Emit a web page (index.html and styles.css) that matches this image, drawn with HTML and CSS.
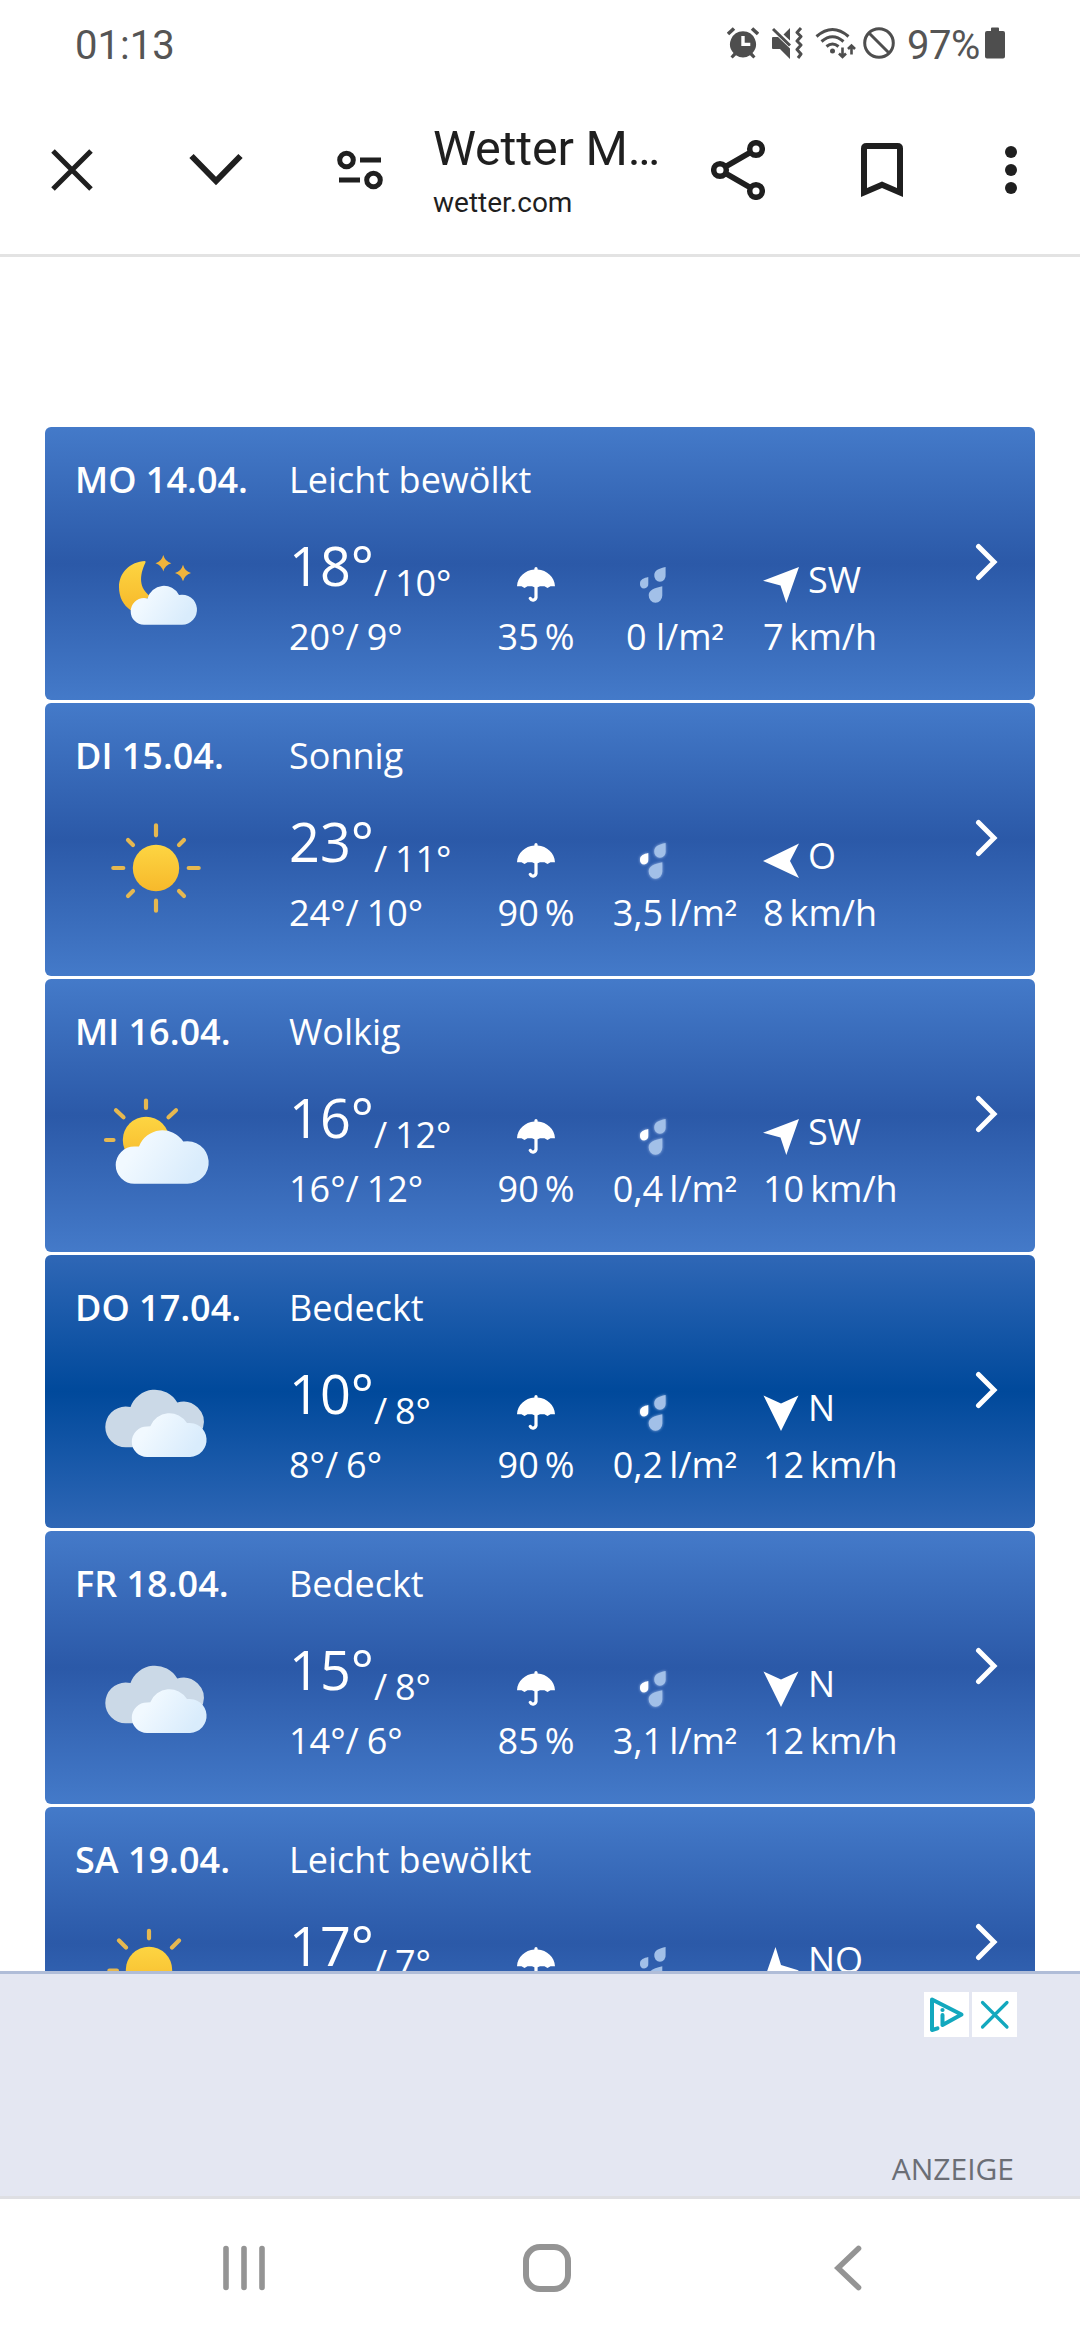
FILE: index.html
```html
<!DOCTYPE html>
<html lang="de">
<head>
<meta charset="utf-8">
<title>Wetter</title>
<link rel="stylesheet" href="styles.css">
</head>
<body>
<svg class="defs" width="0" height="0">
  <defs>
    <linearGradient id="gold" x1="0" y1="0" x2="0" y2="1"><stop offset="0" stop-color="#fdd542"/><stop offset="1" stop-color="#f7b92b"/></linearGradient>
    <linearGradient id="white" x1="0" y1="0" x2="1" y2="0.4"><stop offset="0.3" stop-color="#f1f9ff"/><stop offset="1" stop-color="#d9ecfc"/></linearGradient>
    <symbol id="umbrella" viewBox="0 0 38 36">
      <path fill="#fff" d="M19 0a1.6 1.6 0 0 1 1.6 1.6v1C30 3.300 37.500 10 38 19.300H33.500L30.500 21 27.500 19.300H23L20.600 20.300H17.400L15 19.300H10.500L7.500 21 4.500 19.300H0C.5 10 8 3.300 17.400 2.600v-1A1.600 1.600 0 0 1 19 0z"/>
      <path fill="none" stroke="#fff" stroke-width="3.200" stroke-linecap="round" d="M19 18v12.500a3.200 3.700 0 0 1-5.800.8"/>
    </symbol>
    <symbol id="rain" viewBox="-4 -4 34 44">
      <path class="d1" d="M8.300 10V16.500A4.200 4.500 0 1 1 0 16.300C0 12.500 4 11 8.300 10z"/>
      <path class="d2" d="M25.600 0V8A5.700 5.900 0 1 1 14.300 8C14.300 3.500 19 1.300 25.600 0z"/>
      <path class="d2" d="M22.300 19.300V28.500A6.800 7.300 0 1 1 8.700 28.300C8.700 23.500 14 21 22.300 19.300z"/>
    </symbol>
    <symbol id="sw" viewBox="0 0 36 36"><path fill="#fff" d="M36 0 0 13.700 17.500 18.500 23.300 36z"/></symbol>
    <symbol id="east" viewBox="0 0 36 36"><path fill="#fff" d="M36 .5 27 18 36 35 0 18z"/></symbol>
    <symbol id="north" viewBox="0 0 36 36"><path fill="#fff" d="M.5 .5 18 8.500 35.500 .5 18 36z"/></symbol>
    <symbol id="no" viewBox="0 0 36 36"><path fill="#fff" d="M12.500 0 18 18 36 23.500 0 36z"/></symbol>
    <symbol id="chev" viewBox="0 0 24 38"><path fill="none" stroke="#fff" stroke-width="5" stroke-linecap="round" stroke-linejoin="miter" d="M3.500 3.500 19 19 3.500 34.500"/></symbol>
    <symbol id="overcast" viewBox="0 0 120 120">
      <path fill="#cbd9e7" d="M29.600 87.200A20.300 20.300 0 0 1 29.600 46.600L34.500 46.900A25.900 25.900 0 0 1 81.300 42.600 20.500 20.500 0 0 1 107 68L90 87.200z"/>
      <path fill="url(#white)" d="M51 96.900A15.200 15.200 0 0 1 51 66.500L54.300 66.300A20.600 20.600 0 0 1 91 63.100 17 17 0 1 1 94 96.900z"/>
    </symbol>
  </defs>
</svg>

<div class="screen">
  <div class="status">
    <span class="clock">01:13</span>
    <svg class="i-alarm" width="32" height="32" viewBox="0 0 32 32"><path fill="#4e4e4e" fill-rule="evenodd" d="M16 4.200a13 13 0 0 1 9.500 21.800l3 3.500-2.200 2-3.300-3.200a13 13 0 0 1-14 0l-3.300 3.200-2.200-2 3-3.500A13 13 0 0 1 16 4.200zM14.300 9v10h9v-3.200h-5.600V9z"/><path stroke="#4e4e4e" stroke-width="3.600" d="m1 7 6-5.500M31 7l-6-5.500"/></svg>
    <svg class="i-mute" width="32" height="32" viewBox="0 0 32 32"><path fill="#4e4e4e" d="M1 11q0-1 1-1h5L19 21.500V32L9 22H2q-1 0-1-1zM19 1v12.500L12.500 7.500z"/><path stroke="#4e4e4e" stroke-width="3" d="m2 2 17 16.500"/><path fill="none" stroke="#4e4e4e" stroke-width="3" stroke-linejoin="round" d="m30 1-4 4.500 4 4-4 4.500 4 4-4 4.500 4 4.500-3 4"/></svg>
    <svg class="i-wifi" width="42" height="32" viewBox="0 0 42 32"><g fill="none" stroke="#4e4e4e" stroke-width="3"><path d="M1.500 9.500q16-14 32 0M6.500 14.500q11-9.500 22 0M11.500 19.500q6-5 12 0"/><path stroke-width="2.600" d="M27.500 20.500v9M24 26.500l3.500 3.500 3.500-3.500M36.500 27.500v-9M33 22l3.500-3.500L40 22"/></g><circle cx="17.500" cy="24" r="2.500" fill="#4e4e4e"/></svg>
    <svg class="i-no" width="32" height="32" viewBox="0 0 32 32"><g fill="none" stroke="#4e4e4e" stroke-width="3"><circle cx="16" cy="16" r="14.300"/><path d="m6 6 20 20"/></g></svg>
    <span class="pct">97%</span>
    <svg class="i-bat" width="20" height="32" viewBox="0 0 20 32"><path fill="#4e4e4e" d="M6 1.500Q6 .5 7 .5h6q1 0 1 1V4h4q2 0 2 2v23.500q0 2-2 2H2q-2 0-2-2V6q0-2 2-2h4z"/></svg>
  </div>

  <header class="bar">
    <svg class="b-x" width="42" height="42" viewBox="0 0 42 42"><path stroke="#1f1f1f" stroke-width="5" d="m2 2 38 38M40 2 2 40"/></svg>
    <svg class="b-down" width="54" height="34" viewBox="0 0 54 34"><path fill="none" stroke="#1f1f1f" stroke-width="6" d="m2.500 3 24.500 25L51.500 3"/></svg>
    <svg class="b-tune" width="46" height="40" viewBox="0 0 46 40"><g fill="none" stroke="#1f1f1f" stroke-width="5"><circle cx="9.500" cy="10" r="6.800"/><circle cx="36.500" cy="30" r="6.800"/><path d="M23 10h21M2 30h21"/></g></svg>
    <div class="heading">
      <div class="title">Wetter M…</div>
      <div class="domain">wetter.com</div>
    </div>
    <svg class="b-share" width="54" height="60" viewBox="0 0 54 60"><g fill="none" stroke="#1f1f1f" stroke-width="5.500"><circle cx="9" cy="30" r="6.300"/><circle cx="45" cy="9" r="6.300"/><circle cx="45" cy="51" r="6.300"/><path d="M14 27 40 12M14 33l26 15"/></g></svg>
    <svg class="b-mark" width="42" height="54" viewBox="0 0 42 54"><path fill="#1f1f1f" fill-rule="evenodd" d="M5.500 0h31Q42 0 42 5.500V54L21 45 0 54V5.500Q0 0 5.500 0zM6 6v39l15-6.500L36 45V6z"/></svg>
    <svg class="b-more" width="12" height="48" viewBox="0 0 12 48"><g fill="#1f1f1f"><circle cx="6" cy="6" r="6"/><circle cx="6" cy="24" r="6"/><circle cx="6" cy="42" r="6"/></g></svg>
  </header>

  <main class="list">
    <section class="card">
      <div class="day">MO 14.04.</div><div class="desc">Leicht bewölkt</div>
      <svg class="sky" viewBox="0 0 120 120"><path fill="url(#gold)" d="M49.300 29C34 29.500 23 41 23 55 23 65 27 73 35 78.500L54 64C43 56 43 44 49.500 30.500z"/><path fill="#f0b43c" d="M67.300 23Q69 29.500 75.300 31.300 69 33 67.300 39.500 65.500 33 59.500 31.300 65.500 29.500 67.300 23zM87 32.800Q88.700 39.300 95 41 88.700 42.800 87 49.300 85.300 42.800 79 41 85.300 39.300 87 32.800z"/><path fill="url(#white)" d="M48 92.700A13.300 13.300 0 0 1 48 66.100L51.500 66.400A17 17 0 0 1 83 63 15 15 0 1 1 86 92.700z"/></svg>
      <div class="temp"><span class="max">18°</span><span class="min">/ 10°</span></div>
      <svg class="umb"><use href="#umbrella"/></svg><svg class="drops"><use href="#rain"/></svg>
      <div class="dir"><svg><use href="#sw"/></svg><span>SW</span></div>
      <div class="sub">20°/ 9°</div><div class="prob">35&#8201;%</div><div class="amount">0 l/m<span class="sq">²</span></div><div class="speed">7&#8201;km/h</div>
      <svg class="go"><use href="#chev"/></svg>
    </section>
    <section class="card">
      <div class="day">DI 15.04.</div><div class="desc">Sonnig</div>
      <svg class="sky" viewBox="0 0 120 120"><circle cx="60" cy="60" r="23.200" fill="url(#gold)"/><path stroke="#e6b850" stroke-width="4.200" stroke-linecap="round" d="M60 17.300v10M60 92.700v10M17.300 60h10M92.700 60h10M32 32l5 5M83 83l5 5M88 32l-5 5M37 83l-5 5"/></svg>
      <div class="temp"><span class="max">23°</span><span class="min">/ 11°</span></div>
      <svg class="umb"><use href="#umbrella"/></svg><svg class="drops wet"><use href="#rain"/></svg>
      <div class="dir"><svg><use href="#east"/></svg><span>O</span></div>
      <div class="sub">24°/ 10°</div><div class="prob">90&#8201;%</div><div class="amount">3,5&#8201;l/m<span class="sq">²</span></div><div class="speed">8&#8201;km/h</div>
      <svg class="go"><use href="#chev"/></svg>
    </section>
    <section class="card">
      <div class="day">MI 16.04.</div><div class="desc">Wolkig</div>
      <svg class="sky" viewBox="0 0 120 120"><circle cx="50" cy="56" r="23.200" fill="url(#gold)"/><path stroke="#e6b850" stroke-width="4.200" stroke-linecap="round" d="M50 16.500v7.500M10 56h7.500M20 26.300l7.500 7M80 26.300l-7.500 7"/><path fill="url(#white)" d="M38.400 99.800A18.700 18.700 0 0 1 38.400 62.400H43A25 25 0 0 1 87.300 57.600 21.300 21.300 0 1 1 91 99.800z"/></svg>
      <div class="temp"><span class="max">16°</span><span class="min">/ 12°</span></div>
      <svg class="umb"><use href="#umbrella"/></svg><svg class="drops wet"><use href="#rain"/></svg>
      <div class="dir"><svg><use href="#sw"/></svg><span>SW</span></div>
      <div class="sub">16°/ 12°</div><div class="prob">90&#8201;%</div><div class="amount">0,4&#8201;l/m<span class="sq">²</span></div><div class="speed">10&#8201;km/h</div>
      <svg class="go"><use href="#chev"/></svg>
    </section>
    <section class="card dark">
      <div class="day">DO 17.04.</div><div class="desc">Bedeckt</div>
      <svg class="sky"><use href="#overcast"/></svg>
      <div class="temp"><span class="max">10°</span><span class="min">/ 8°</span></div>
      <svg class="umb"><use href="#umbrella"/></svg><svg class="drops wet"><use href="#rain"/></svg>
      <div class="dir"><svg><use href="#north"/></svg><span>N</span></div>
      <div class="sub">8°/ 6°</div><div class="prob">90&#8201;%</div><div class="amount">0,2&#8201;l/m<span class="sq">²</span></div><div class="speed">12&#8201;km/h</div>
      <svg class="go"><use href="#chev"/></svg>
    </section>
    <section class="card">
      <div class="day">FR 18.04.</div><div class="desc">Bedeckt</div>
      <svg class="sky"><use href="#overcast"/></svg>
      <div class="temp"><span class="max">15°</span><span class="min">/ 8°</span></div>
      <svg class="umb"><use href="#umbrella"/></svg><svg class="drops wet"><use href="#rain"/></svg>
      <div class="dir"><svg><use href="#north"/></svg><span>N</span></div>
      <div class="sub">14°/ 6°</div><div class="prob">85&#8201;%</div><div class="amount">3,1&#8201;l/m<span class="sq">²</span></div><div class="speed">12&#8201;km/h</div>
      <svg class="go"><use href="#chev"/></svg>
    </section>
    <section class="card">
      <div class="day">SA 19.04.</div><div class="desc">Leicht bewölkt</div>
      <svg class="sky" viewBox="0 0 120 120"><circle cx="53" cy="58" r="23.200" fill="url(#gold)"/><path stroke="#e6b850" stroke-width="4.200" stroke-linecap="round" d="M53 18.800v7.500M13.400 58.500h7.500M23 28.500l7 7M83 28.500l-7 7"/></svg>
      <div class="temp"><span class="max">17°</span><span class="min">/ 7°</span></div>
      <svg class="umb"><use href="#umbrella"/></svg><svg class="drops"><use href="#rain"/></svg>
      <div class="dir"><svg><use href="#no"/></svg><span>NO</span></div>
      <svg class="go"><use href="#chev"/></svg>
    </section>
  </main>

  <aside class="ad">
    <div class="choices">
      <svg viewBox="0 0 45 45"><g fill="none" stroke="#12a8be" stroke-width="4" stroke-linecap="round" stroke-linejoin="round"><path d="M13.500 36.300 8 38V7.500L37.500 22.500 18.500 33V23"/></g><circle cx="18.500" cy="18" r="2.100" fill="#12a8be"/></svg>
      <svg viewBox="0 0 45 45"><path stroke="#12a8be" stroke-width="3.200" stroke-linecap="round" d="m10.500 10.500 24.500 24.500M35 10.500 10.500 35"/></svg>
    </div>
    <div class="label">ANZEIGE</div>
  </aside>

  <nav class="nav">
    <svg width="42" height="46" viewBox="0 0 42 46"><path stroke="#949494" stroke-width="5.600" stroke-linecap="round" d="M3 3.500v39M21 3.500v39M39 3.500v39"/></svg>
    <svg class="home" width="48" height="48" viewBox="0 0 48 48"><rect x="3" y="3" width="42" height="42" rx="14" fill="none" stroke="#949494" stroke-width="6"/></svg>
    <svg width="28" height="46" viewBox="0 0 28 46"><path fill="none" stroke="#949494" stroke-width="5.600" stroke-linecap="round" d="M24.500 3.500 4 23l20.500 19.500"/></svg>
  </nav>
</div>
</body>
</html>
```

FILE: styles.css
```css
* { box-sizing: border-box; }
body { margin: 0; background: #fff; font-family: "Open Sans", sans-serif; }
svg { display: block; flex: none; }
.defs { height: 0; overflow: hidden; }
.screen { width: 1080px; height: 2340px; display: flex; flex-direction: column; overflow: hidden; }

.status { height: 86px; display: flex; align-items: center; padding-left: 75px; font: 40px/48px Roboto, sans-serif; color: #555; }
.status .clock { width: 652px; padding-top: 5px; }
.i-mute { margin-left: 12px; }
.i-wifi { margin-left: 12px; }
.i-no { margin-left: 6px; }
.status .pct { width: 78px; margin-left: 12px; padding-top: 5px; letter-spacing: -0.5px; white-space: nowrap; }

.bar { height: 171px; display: flex; align-items: center; padding: 0 0 0 51px; border-bottom: 3px solid #e3e3e3; font-family: Roboto, sans-serif; color: #1f1f1f; }
.b-down { margin-left: 96px; }
.b-tune { margin-left: 94px; }
.heading { width: 228px; margin-left: 50px; padding-top: 2px; white-space: nowrap; }
.title { font-size: 48.5px; letter-spacing: -0.2px; line-height: 60px; }
.domain { font-size: 28px; line-height: 40px; margin-top: 4px; }
.b-share { margin-left: 50px; }
.b-mark { margin-left: 96px; }
.b-more { margin-left: 102px; }

.list { height: 1714px; padding: 170px 45px 0; overflow: hidden; display: flex; flex-direction: column; gap: 3px; }
.card {
  flex: none;
  height: 273px;
  padding: 29px 0 0 30px;
  display: grid;
  grid-template-columns: 214px 192px 110px 168px 213px 30px;
  grid-template-rows: 48px 109px 48px;
  border-radius: 6px;
  background: linear-gradient(#447ac9, #2b59a8 50%, #447ac9);
  color: #fff;
  font-size: 36px;
  line-height: 48px;
  white-space: nowrap;
}
.card.dark { background: linear-gradient(#2f67b6, #00499b 50%, #2f67b6); }
.day { font-weight: 600; }
.desc { grid-column: 2 / 6; }
.sky { grid-column: 1; grid-row: 2 / 4; width: 120px; height: 120px; margin: 28px 0 0 21px; }
.temp, .umb, .drops, .dir { grid-row: 2; align-self: end; }
.temp { grid-column: 2; display: flex; align-items: flex-end; margin-bottom: 6px; }
.max { font-size: 54px; line-height: 60px; margin-bottom: 12px; }
.min, .sub { word-spacing: -1.5px; }
.umb { grid-column: 3; width: 38px; height: 36px; justify-self: center; margin-bottom: 10px; }
.drops { grid-column: 4; width: 34px; height: 44px; margin: 0 0 6px 45px; fill: #a2c0e8; --first: #a2c0e8; overflow: visible; }
.drops.wet { --first: #fff; filter: drop-shadow(0 0 1.5px rgba(200, 220, 255, 0.7)); }
.d1 { fill: var(--first); }
.dir { grid-column: 5; display: flex; align-items: flex-end; gap: 9px; margin-bottom: 9px; padding-left: 4px; }
.dir svg { width: 36px; height: 36px; margin-bottom: 1px; }
.sub, .prob, .amount, .speed { grid-row: 3; }
.sub { grid-column: 2; }
.prob { grid-column: 3; text-align: center; }
.amount { grid-column: 4; width: 168px; text-align: center; }
.sq { display: inline-block; line-height: 1; transform: translateY(5px); }
.speed { grid-column: 5; padding-left: 4px; }
.go { grid-column: 6; grid-row: 2; width: 24px; height: 38px; margin: 39px 0 0 3px; }

.ad { height: 228px; background: #e4e7f2; border-top: 3px solid #b0bdd8; border-bottom: 3px solid #dedfe3; padding: 18px 63px 0 0; display: flex; flex-direction: column; align-items: flex-end; justify-content: space-between; }
.choices { display: flex; gap: 3px; }
.choices svg { width: 45px; height: 45px; background: #fff; }
.label { font-size: 30px; line-height: 40px; margin: 0 3px 7px 0; color: #6b6e75; }

.nav { height: 141px; display: flex; align-items: center; justify-content: space-between; padding: 0 218px 4px 223px; }
.home { margin-right: 6px; }
```
